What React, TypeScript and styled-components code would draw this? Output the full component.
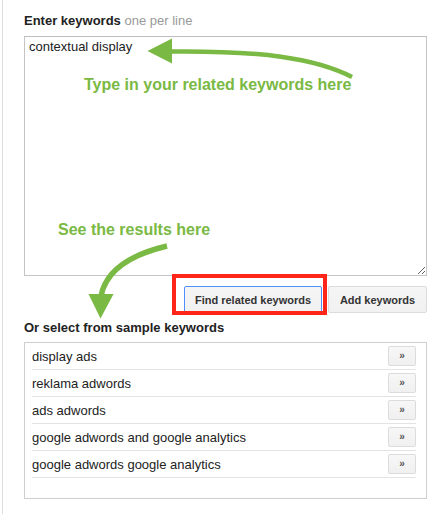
import React from "react";
import styled, { createGlobalStyle } from "styled-components";

const GREEN = "#7ab943";

const Global = createGlobalStyle`
  html, body { margin: 0; padding: 0; background: #fff; }
  body { font-family: "Liberation Sans", Arial, sans-serif; }
  * { box-sizing: border-box; }
`;

const Page = styled.div`
  position: relative;
  min-height: 100vh;
  padding: 13px 12px 0 24px;
  background: linear-gradient(#dedede, #dedede) 2px 0 / 1px 100% no-repeat, #fff;
`;

const Label = styled.h3`
  margin: 0;
  font-size: 13px;
  line-height: 16px;
  font-weight: bold;
  color: #222;
`;

const Hint = styled.span`
  font-weight: normal;
  color: #999;
`;

const KeywordArea = styled.textarea`
  display: block;
  width: 100%;
  height: 240px;
  margin: 7px 0 0;
  padding: 2px 4px;
  border: 1px solid #c4c4c4;
  border-top-color: #bdbdbd;
  font-family: "Liberation Sans", Arial, sans-serif;
  font-size: 13px;
  line-height: 16px;
  color: #222;
  background: #fff;
  outline: none;
`;

const ButtonRow = styled.div`
  display: flex;
  justify-content: flex-end;
  gap: 6px;
  margin-top: 10px;
`;

const ActionButton = styled.button<{ $focused?: boolean; $w: number }>`
  width: ${(p) => p.$w}px;
  height: 27px;
  padding: 0;
  border: 1px solid ${(p) => (p.$focused ? "#4d90fe" : "#dcdcdc")};
  border-radius: 2px;
  background: linear-gradient(#f5f5f5, #f1f1f1);
  font-family: "Liberation Sans", Arial, sans-serif;
  font-size: 11px;
  font-weight: bold;
  color: #333;
  cursor: pointer;
`;

const SectionLabel = styled(Label)`
  margin-top: 7px;
`;

const SampleList = styled.ul`
  list-style: none;
  margin: 6px 0 0;
  padding: 0 10px 20px 7px;
  border: 1px solid #cfcfcf;
`;

const SampleRow = styled.li`
  display: flex;
  align-items: center;
  justify-content: space-between;
  height: 27px;
  border-bottom: 1px solid #e3e3e3;
  font-size: 13px;
  color: #222;
`;

const AddArrow = styled.button`
  width: 28px;
  height: 20px;
  padding: 0;
  border: 1px solid #dcdcdc;
  border-radius: 2px;
  background: linear-gradient(#f7f7f7, #f0f0f0);
  font-family: "Liberation Sans", Arial, sans-serif;
  font-size: 10px;
  font-weight: bold;
  line-height: 18px;
  color: #555;
`;

const Overlay = styled.svg`
  position: absolute;
  left: 0;
  top: 0;
  pointer-events: none;
`;

const Note = styled.span<{ $x: number; $y: number }>`
  position: absolute;
  left: ${(p) => p.$x}px;
  top: ${(p) => p.$y}px;
  font-size: 16px;
  line-height: 16px;
  font-weight: bold;
  color: ${GREEN};
  white-space: nowrap;
  pointer-events: none;
`;

const Highlight = styled.div`
  position: absolute;
  left: 172px;
  top: 274px;
  width: 155px;
  height: 41px;
  border: 4px solid #ff2518;
  pointer-events: none;
`;

const samples = [
  "display ads",
  "reklama adwords",
  "ads adwords",
  "google adwords and google analytics",
  "google adwords google analytics",
];

export default function App() {
  return (
    <>
      <Global />
      <Page>
        <Label>
          Enter keywords <Hint>one per line</Hint>
        </Label>
        <KeywordArea defaultValue="contextual display" spellCheck={false} />
        <ButtonRow>
          <ActionButton $focused $w={138}>Find related keywords</ActionButton>
          <ActionButton $w={99}>Add keywords</ActionButton>
        </ButtonRow>
        <SectionLabel>Or select from sample keywords</SectionLabel>
        <SampleList>
          {samples.map((s) => (
            <SampleRow key={s}>
              <span>{s}</span>
              <AddArrow>»</AddArrow>
            </SampleRow>
          ))}
        </SampleList>

        <Overlay width={439} height={514} viewBox="0 0 439 514">
          <path
            d="M170 51.5 C 260 50.5, 315 58, 352 77"
            fill="none"
            stroke={GREEN}
            strokeWidth={4.5}
          />
          <polygon points="147.5,51 172,38.5 172,63.5" fill={GREEN} />
          <path
            d="M167 246 Q 108 260, 101 296"
            fill="none"
            stroke={GREEN}
            strokeWidth={5.5}
          />
          <polygon points="88.5,294 113.5,294 100.5,318.5" fill={GREEN} />
        </Overlay>
        <Note $x={84} $y={76.5}>Type in your related keywords here</Note>
        <Note $x={58} $y={221.5}>See the results here</Note>
        <Highlight />
      </Page>
    </>
  );
}
